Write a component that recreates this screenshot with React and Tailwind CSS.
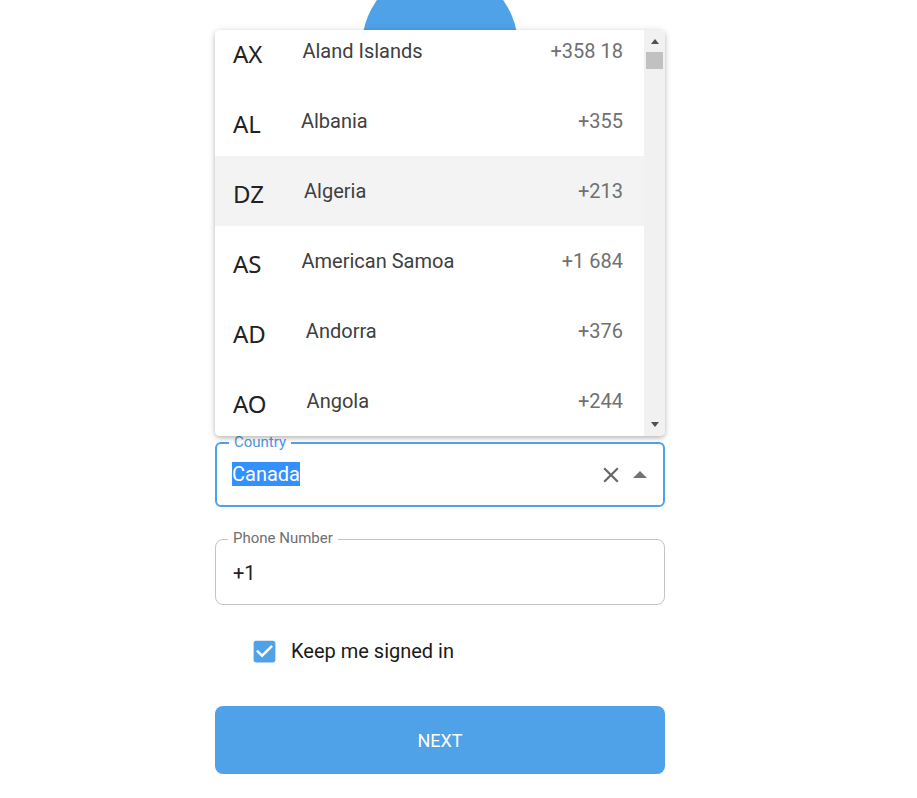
const countries = [
  { code: "AX", label: "Aland Islands", phone: "+358 18" },
  { code: "AL", label: "Albania", phone: "+355" },
  { code: "DZ", label: "Algeria", phone: "+213", active: true },
  { code: "AS", label: "American Samoa", phone: "+1 684" },
  { code: "AD", label: "Andorra", phone: "+376" },
  { code: "AO", label: "Angola", phone: "+244" },
  { code: "AI", label: "Anguilla", phone: "+1 264" },
];

const CountryList = () => {
  return (
    <div className="absolute top-[30px] left-0 w-[450px] h-[406px] bg-white rounded-[5px] overflow-hidden flex shadow-[0_2px_4px_rgba(0,0,0,0.2),0_1px_8px_rgba(0,0,0,0.12)] z-10">
      <div className="flex-1 overflow-hidden">
        <ul className="-mt-[14px]">
          {countries.map((c) => (
            <li
              key={c.code}
              className={`h-[70px] flex items-center pl-[18px] pr-[21px] ${
                c.active ? "bg-[#f3f3f3]" : "bg-white"
              }`}
            >
              <span className="font-['Noto_Sans',sans-serif] text-[24px] leading-none text-[#222] mt-[6px]">
                {c.code}
              </span>
              <span className="ml-[40px] flex-1 text-[20px] text-[#404040]">
                {c.label}
              </span>
              <span className="text-[20px] text-[#707070]">{c.phone}</span>
            </li>
          ))}
        </ul>
      </div>
      <div className="w-[21px] bg-[#f1f1f1] flex flex-col items-center">
        <svg width="8" height="5" viewBox="0 0 8 5" className="mt-[9px]">
          <path d="M0 5 L4 0 L8 5 Z" fill="#505050" />
        </svg>
        <div className="w-[17px] h-[17px] bg-[#c1c1c1] mt-[8px]" />
        <div className="flex-1" />
        <svg width="8" height="5" viewBox="0 0 8 5" className="mb-[9px]">
          <path d="M0 0 L4 5 L8 0 Z" fill="#505050" />
        </svg>
      </div>
    </div>
  );
};

const App = () => {
  return (
    <div className="w-[917px] h-[798px] bg-white overflow-hidden font-['Roboto',sans-serif]">
      <div className="relative w-[450px] ml-[215px] flex flex-col">
        <div className="w-[156px] h-[156px] rounded-full bg-[#4fa1e8] mx-auto -mt-[32px]" />

        <CountryList />

        {/* Country field */}
        <div className="relative mt-[318px] h-[65px] border-2 border-[#4fa1e8] rounded-[6px] flex items-center pl-[15px] pr-[16px]">
          <span className="absolute -top-[10px] left-[12px] px-[5px] bg-white text-[15px] leading-[16px] text-[#4f96e0]">
            Country
          </span>
          <span className="flex-1">
            <span className="bg-[#3390ff] text-white text-[20px] leading-[24px] inline-block">
              Canada
            </span>
          </span>
          <svg width="26" height="26" viewBox="0 0 24 24" className="mr-[9px]">
            <path
              fill="rgba(0,0,0,0.6)"
              d="M19 6.41L17.59 5 12 10.59 6.41 5 5 6.41 10.59 12 5 17.59 6.41 19 12 13.41 17.59 19 19 17.59 13.41 12z"
            />
          </svg>
          <svg width="14" height="8" viewBox="0 0 14 8">
            <path d="M0 7 L7 0 L14 7 Z" fill="rgba(0,0,0,0.55)" />
          </svg>
        </div>

        {/* Phone field */}
        <div className="relative mt-[32px] h-[66px] border border-[#c4c4c4] rounded-[8px] flex items-center pl-[17px]">
          <span className="absolute -top-[10px] left-[12px] px-[5px] bg-white text-[15px] leading-[16px] text-[#6f6f6f]">
            Phone Number
          </span>
          <span className="text-[20px] text-[#222] mt-[2px]">+1</span>
        </div>

        {/* Keep signed in */}
        <label className="flex items-center mt-[31px] ml-[35px]">
          <svg width="29" height="29" viewBox="0 0 24 24">
            <path
              fill="#4fa1e8"
              d="M19 3H5c-1.11 0-2 .9-2 2v14c0 1.1.89 2 2 2h14c1.11 0 2-.9 2-2V5c0-1.1-.89-2-2-2zm-9 14l-5-5 1.41-1.41L10 14.17l7.59-7.59L19 8l-9 9z"
            />
          </svg>
          <span className="ml-[12px] text-[20px] text-[#1a1a1a]">
            Keep me signed in
          </span>
        </label>

        <button className="mt-[40px] w-full h-[68px] rounded-[8px] bg-[#4fa1e8] text-white text-[18px] font-normal">
          NEXT
        </button>
      </div>
    </div>
  );
};

export default App;
